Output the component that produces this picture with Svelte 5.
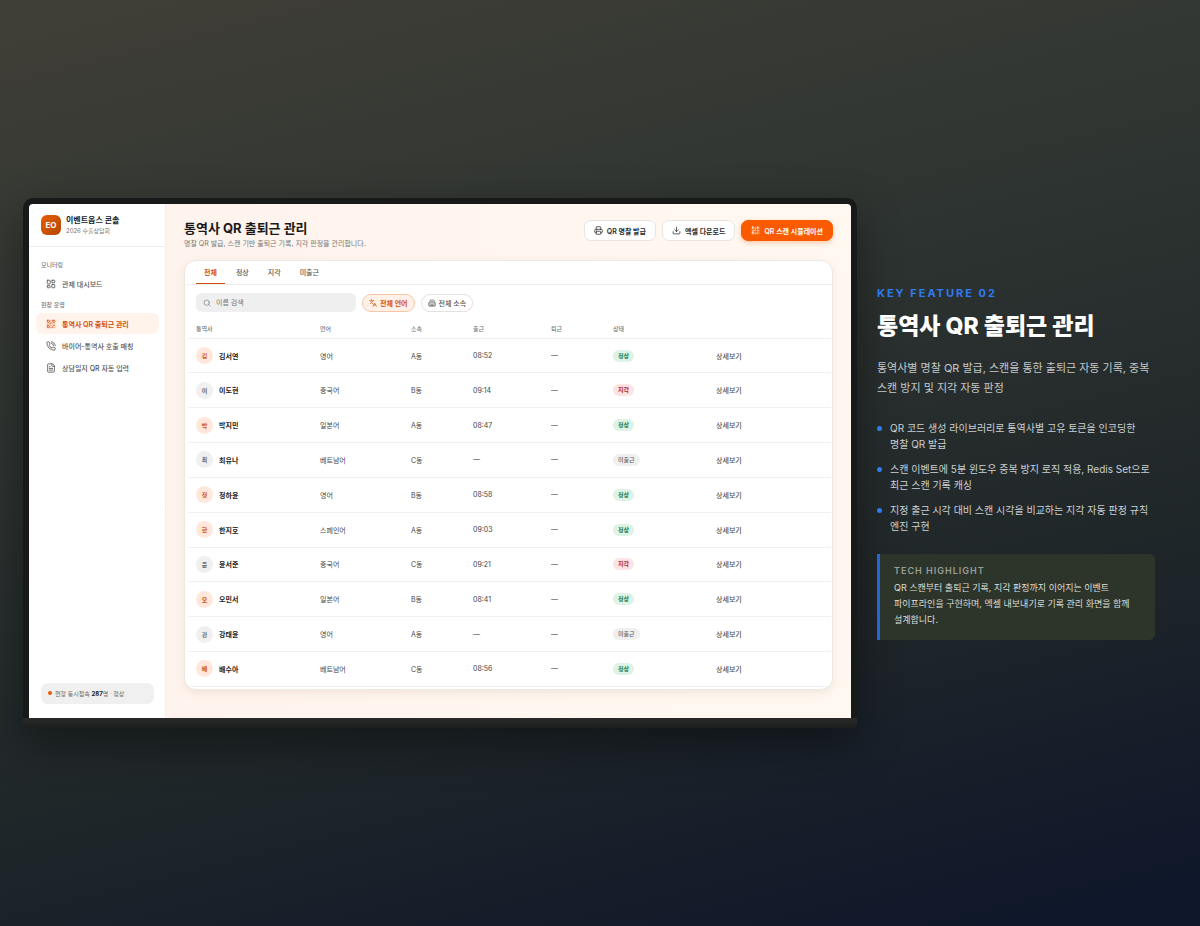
<script>
  const rows = [
    ['김서연', '영어', 'A동', '08:52', '정상'],
    ['이도현', '중국어', 'B동', '09:14', '지각'],
    ['박지민', '일본어', 'A동', '08:47', '정상'],
    ['최유나', '베트남어', 'C동', '—', '미출근'],
    ['정하윤', '영어', 'B동', '08:58', '정상'],
    ['한지호', '스페인어', 'A동', '09:03', '정상'],
    ['윤서준', '중국어', 'C동', '09:21', '지각'],
    ['오민서', '일본어', 'B동', '08:41', '정상'],
    ['강태윤', '영어', 'A동', '—', '미출근'],
    ['배수아', '베트남어', 'C동', '08:56', '정상']
  ];
  const tone = { 정상: 'ok', 지각: 'late', 미출근: 'none' };
  const tabs = ['전체', '정상', '지각', '미출근'];
  let tab = $state('전체');
  let query = $state('');
  const shown = $derived(
    rows.filter((r) => (tab === '전체' || r[4] === tab) && r[0].includes(query))
  );
  const points = [
    'QR 코드 생성 라이브러리로 통역사별 고유 토큰을 인코딩한 명찰 QR 발급',
    '스캔 이벤트에 5분 윈도우 중복 방지 로직 적용, Redis Set으로 최근 스캔 기록 캐싱',
    '지정 출근 시각 대비 스캔 시각을 비교하는 지각 자동 판정 규칙 엔진 구현'
  ];
</script>

{#snippet icon(name)}
  <svg class="icon" viewBox="0 0 24 24" aria-hidden="true">
    {#if name === 'dashboard'}
      <rect x="3" y="3" width="7" height="9" rx="1" /><rect x="14" y="3" width="7" height="6" rx="1" />
      <rect x="14" y="13" width="7" height="8" rx="1" /><rect x="3" y="16" width="7" height="5" rx="1" />
    {:else if name === 'qr'}
      <rect x="3" y="3" width="5" height="5" rx="1" /><rect x="16" y="3" width="5" height="5" rx="1" />
      <rect x="3" y="16" width="5" height="5" rx="1" />
      <path d="M21 16h-3a2 2 0 0 0-2 2v3M21 21v.01M12 7v3a2 2 0 0 1-2 2H7M3 12h.01M12 3h.01M12 16v.01M16 12h1M21 12v.01M12 21v-1" />
    {:else if name === 'phone'}
      <path d="M13 2a9 9 0 0 1 9 9M13 6a5 5 0 0 1 5 5" />
      <path d="M13.8 16.6a1 1 0 0 0 1.2-.3l.4-.5A2 2 0 0 1 17 15h3a2 2 0 0 1 2 2v3a2 2 0 0 1-2 2A18 18 0 0 1 2 4a2 2 0 0 1 2-2h3a2 2 0 0 1 2 2v3a2 2 0 0 1-.8 1.6l-.5.4a1 1 0 0 0-.3 1.2 14 14 0 0 0 6.400 6.400" />
    {:else if name === 'file'}
      <path d="M15 2H6a2 2 0 0 0-2 2v16a2 2 0 0 0 2 2h12a2 2 0 0 0 2-2V7zM14 2v4a2 2 0 0 0 2 2h4M10 9H8M16 13H8M16 17H8" />
    {:else if name === 'printer'}
      <path d="M6 18H4a2 2 0 0 1-2-2v-5a2 2 0 0 1 2-2h16a2 2 0 0 1 2 2v5a2 2 0 0 1-2 2h-2M6 9V3a1 1 0 0 1 1-1h10a1 1 0 0 1 1 1v6" />
      <rect x="6" y="14" width="12" height="8" rx="1" />
    {:else if name === 'download'}
      <path d="M12 15V3M21 15v4a2 2 0 0 1-2 2H5a2 2 0 0 1-2-2v-4M7 10l5 5 5-5" />
    {:else if name === 'search'}
      <circle cx="11" cy="11" r="8" /><path d="m21 21-4.300-4.300" />
    {:else if name === 'language'}
      <path d="m5 8 6 6M4 14l6-6 2-3M2 5h12M7 2h1M22 22l-5-10-5 10M14 18h6" />
    {:else}
      <path d="M10 12h4M10 8h4M14 21v-3a2 2 0 0 0-4 0v3M6 10H4a2 2 0 0 0-2 2v7a2 2 0 0 0 2 2h16a2 2 0 0 0 2-2v-7a2 2 0 0 0-2-2h-2M6 21V5a2 2 0 0 1 2-2h8a2 2 0 0 1 2 2v16" />
    {/if}
  </svg>
{/snippet}

<main class="slide">
  <section class="device" aria-label="이벤트옵스 콘솔">
    <div class="screen">
      <aside class="sidebar">
        <div class="brand">
          <span class="logo">EO</span>
          <div><strong>이벤트옵스 콘솔</strong><small>2026 수출상담회</small></div>
        </div>
        <nav>
          <h3>모니터링</h3>
          <a href="#dashboard">{@render icon('dashboard')}관제 대시보드</a>
          <h3>현장 운영</h3>
          <a class="active" href="#attendance">{@render icon('qr')}통역사 QR 출퇴근 관리</a>
          <a href="#calls">{@render icon('phone')}바이어-통역사 호출 매칭</a>
          <a href="#journal">{@render icon('file')}상담일지 QR 자동 입력</a>
        </nav>
        <p class="live"><i></i><span>현장 동시접속 <b>287</b>명 · 정상</span></p>
      </aside>

      <div class="content">
        <header>
          <div class="heading">
            <h1>통역사 QR 출퇴근 관리</h1>
            <p>명찰 QR 발급, 스캔 기반 출퇴근 기록, 지각 판정을 관리합니다.</p>
          </div>
          <div class="actions">
            <button>{@render icon('printer')}QR 명찰 발급</button>
            <button>{@render icon('download')}엑셀 다운로드</button>
            <button class="primary">{@render icon('qr')}QR 스캔 시뮬레이션</button>
          </div>
        </header>

        <div class="card">
          <div class="tabs">
            {#each tabs as t}
              <button class:on={tab === t} onclick={() => (tab = t)}>{t}</button>
            {/each}
          </div>
          <div class="filters">
            <label class="search">
              {@render icon('search')}
              <input type="text" placeholder="이름 검색" aria-label="이름 검색" bind:value={query} />
            </label>
            <button class="chip on">{@render icon('language')}전체 언어</button>
            <button class="chip">{@render icon('building')}전체 소속</button>
          </div>
          <div class="tablewrap">
            <table>
              <colgroup>
                <col class="c1" /><col class="c2" /><col class="c3" /><col class="c4" /><col class="c5" /><col class="c6" /><col />
              </colgroup>
              <thead>
                <tr><th>통역사</th><th>언어</th><th>소속</th><th>출근</th><th>퇴근</th><th>상태</th><td></td></tr>
              </thead>
              <tbody>
                {#each shown as [name, lang, team, time, status]}
                  <tr>
                    <td>
                      <div class="person">
                        <span class="avatar" class:warm={status === '정상'}>{name[0]}</span><b>{name}</b>
                      </div>
                    </td>
                    <td>{lang}</td>
                    <td>{team}</td>
                    <td>{time}</td>
                    <td>—</td>
                    <td><span class="badge {tone[status]}">{status}</span></td>
                    <td><button class="detail">상세보기</button></td>
                  </tr>
                {/each}
              </tbody>
            </table>
          </div>
        </div>
      </div>
    </div>
    <div class="chin"></div>
  </section>

  <section class="story">
    <p class="eyebrow">KEY FEATURE 02</p>
    <h2>통역사 QR 출퇴근 관리</h2>
    <p class="lead">통역사별 명찰 QR 발급, 스캔을 통한 출퇴근 자동 기록, 중복 스캔 방지 및 지각 자동 판정</p>
    <ul>
      {#each points as point}<li>{point}</li>{/each}
    </ul>
    <div class="tech">
      <h4>TECH HIGHLIGHT</h4>
      <p>QR 스캔부터 출퇴근 기록, 지각 판정까지 이어지는 이벤트 파이프라인을 구현하며, 엑셀 내보내기로 기록 관리 화면을 함께 설계합니다.</p>
    </div>
  </section>
</main>

<style>
  :global(body) { margin: 0; }
  .slide, .slide * { box-sizing: border-box; }
  .slide {
    min-height: 100vh;
    padding: 24px 45px 24px 23px;
    display: grid;
    grid-template-columns: 3fr 1fr;
    align-items: center;
    gap: 20px;
    background: linear-gradient(166deg, #403f37 0%, #2e3431 36%, #202729 66%, #0f172a 96%);
    font-family: Inter, "Noto Sans CJK KR", sans-serif;
    word-break: keep-all;
    color: #fff;
  }
  h1, h2, h3, h4, p, ul { margin: 0; padding: 0; }
  button, input { font: inherit; color: inherit; margin: 0; }
  button { cursor: pointer; white-space: nowrap; }
  .icon {
    width: 10px; height: 10px; flex: none;
    fill: none; stroke: currentColor; stroke-width: 2; stroke-linecap: round; stroke-linejoin: round;
  }

  .device { min-width: 0; border-radius: 10px 10px 4px 4px; box-shadow: 0 16px 44px rgb(0 0 0 / 40%); }
  .screen {
    aspect-ratio: 16 / 10;
    display: flex;
    box-sizing: content-box !important;
    border: 6px solid #181a1a;
    border-bottom: 0;
    border-radius: 10px 10px 0 0;
    background: #181a1a;
    color: #2a2a2a;
    font-size: 7px;
  }
  .chin { height: 10px; background: linear-gradient(#2a2a2a, #1c1e1e); border-radius: 0 0 4px 4px; }

  .sidebar {
    width: 137px; flex: none; display: flex; flex-direction: column;
    background: #fff; border-right: 1px solid #efefef; border-top-left-radius: 4px;
  }
  .brand {
    height: 43px; padding: 0 12px; display: flex; align-items: center; gap: 5px;
    border-bottom: 1px solid #efefef;
  }
  .logo {
    width: 20px; height: 20px; flex: none; display: grid; place-items: center; border-radius: 6px;
    background: linear-gradient(135deg, #e85d04, #b34700); color: #fff; font-size: 8px; font-weight: 700;
  }
  .brand strong { display: block; font-size: 8px; line-height: 11px; color: #1a1a1a; }
  .brand small { display: block; font-size: 6px; line-height: 9px; color: #777; }
  nav { flex: 1; padding: 10px 6px 10px 7px; }
  h3 { padding: 0 5px; font-size: 6px; line-height: 16px; font-weight: 500; color: #777; }
  nav a + h3 { margin-top: 3px; }
  nav a {
    height: 21px; margin-bottom: 1px; padding: 0 10px; display: flex; align-items: center; gap: 6px;
    border-radius: 6px; color: #555; text-decoration: none; font-weight: 500; white-space: nowrap;
  }
  nav a.active { background: #fff3ec; color: #d4500a; font-weight: 600; }
  .live {
    margin: 0 11px 14px 12px; height: 21px; padding: 0 7px; display: flex; align-items: center; gap: 3px;
    border-radius: 7px; background: #f0f0f0; color: #666; font-size: 6px;
  }
  .live i { width: 4px; height: 4px; border-radius: 50%; background: #e85d04; }
  .live b { color: #222; }

  .content {
    flex: 1; min-width: 0; padding: 15px 18px 28px; display: flex; flex-direction: column;
    background: linear-gradient(90deg, #fff4ed, #fff8f1); border-top-right-radius: 4px;
  }
  header { height: 41px; flex: none; display: flex; justify-content: space-between; align-items: flex-start; }
  h1 { font-size: 13px; line-height: 18px; font-weight: 700; color: #1a1a1a; }
  .heading p { line-height: 14px; color: #777; }
  .actions { display: flex; gap: 6px; padding-top: 1px; }
  .actions button {
    height: 21px; padding: 0 9px; display: flex; align-items: center; gap: 4px;
    border: 1px solid #e8e4e0; border-radius: 7px; background: #fff; font-weight: 600;
  }
  .actions .icon { width: 9px; height: 9px; }
  .actions .primary { border-color: #fa5a00; background: #fa5a00; color: #fff; box-shadow: 0 2px 5px rgb(250 90 0 / 30%); }

  .card {
    flex: 1; min-height: 0; display: flex; flex-direction: column; overflow: hidden;
    background: #fff; border: 1px solid #ece8e4; border-radius: 12px; box-shadow: 0 3px 10px rgb(120 80 40 / 10%);
  }
  .tabs { height: 24px; flex: none; padding: 0 11px; display: flex; gap: 3px; border-bottom: 1px solid #efefef; }
  .tabs button { padding: 0 8px; border: 0; border-bottom: 1px solid transparent; background: none; color: #555; font-weight: 500; }
  .tabs button.on { color: #d4500a; border-color: #d4500a; font-weight: 700; }
  .filters { flex: none; padding: 8px 11px 7px; display: flex; align-items: center; gap: 6px; }
  .search {
    width: 160px; height: 19px; padding: 0 7px; display: flex; align-items: center; gap: 5px;
    border-radius: 6px; background: #efefef; color: #777;
  }
  .search .icon, .chip .icon { width: 8px; height: 8px; }
  .search input { flex: 1; min-width: 0; padding: 0; border: 0; outline: 0; background: none; }
  .search input::placeholder { color: #777; opacity: 1; }
  .chip {
    height: 18px; padding: 0 6px; display: flex; align-items: center; gap: 3px;
    border: 1px solid #e2e2e2; border-radius: 9px; background: #fff; color: #555; font-weight: 500;
  }
  .chip.on { border-color: #f6c6a6; background: #fff1e8; color: #d4500a; font-weight: 600; }
  .tablewrap { flex: 1; min-height: 0; padding: 0 1px 2px 3px; }
  table { width: 100%; height: 100%; border-collapse: collapse; table-layout: fixed; }
  .c1 { width: 124px; } .c2 { width: 91px; } .c3 { width: 62px; } .c4 { width: 78px; } .c5 { width: 62px; } .c6 { width: 103px; }
  th, td { padding: 0 0 0 8px; text-align: left; border-bottom: 1px solid #f0f0f0; white-space: nowrap; color: #444; }
  thead tr { height: 19px; }
  th { font-size: 6px; font-weight: 500; color: #777; }
  .person { display: flex; align-items: center; gap: 6px; }
  .person b { color: #222; font-weight: 600; }
  .avatar {
    width: 17px; height: 17px; display: grid; place-items: center; border-radius: 50%;
    background: #f0f0f0; color: #666; font-size: 6px; font-weight: 600;
  }
  .avatar.warm { background: #ffe8db; color: #d4500a; }
  .badge {
    display: inline-block; padding: 0 5px; border-radius: 6px; line-height: 12px; font-size: 6px; font-weight: 600;
  }
  .ok { background: #dcf3e6; color: #1a7a4a; }
  .late { background: #fce4e4; color: #b3262e; }
  .none { background: #efefef; color: #666; font-weight: 500; }
  .detail { padding: 0; border: 0; background: none; color: #555; font-weight: 500; }

  .story { min-width: 0; }
  .eyebrow { font-size: 11px; line-height: 14px; font-weight: 700; letter-spacing: 2px; color: #2f7bf0; }
  h2 { margin-top: 9px; font-size: 23px; line-height: 34px; font-weight: 800; white-space: nowrap; }
  .lead { margin-top: 15px; font-size: 11px; line-height: 20px; color: #c4c8ca; }
  ul { margin-top: 22px; display: grid; gap: 9px; list-style: none; }
  li { display: flex; gap: 8px; font-size: 10px; line-height: 16px; color: #ccd0d4; }
  li::before { content: ""; flex: none; width: 5px; height: 5px; margin-top: 6px; border-radius: 50%; background: #2f7bf0; }
  .tech { margin-top: 20px; padding: 10px 14px 12px; border-left: 3px solid #2468d8; border-radius: 0 6px 6px 0; background: #2d352a; }
  h4 { font-size: 9px; line-height: 14px; font-weight: 600; letter-spacing: 1px; color: #9a9e98; }
  .tech p { margin-top: 2px; font-size: 9px; line-height: 16px; color: #dcdeda; }
</style>
